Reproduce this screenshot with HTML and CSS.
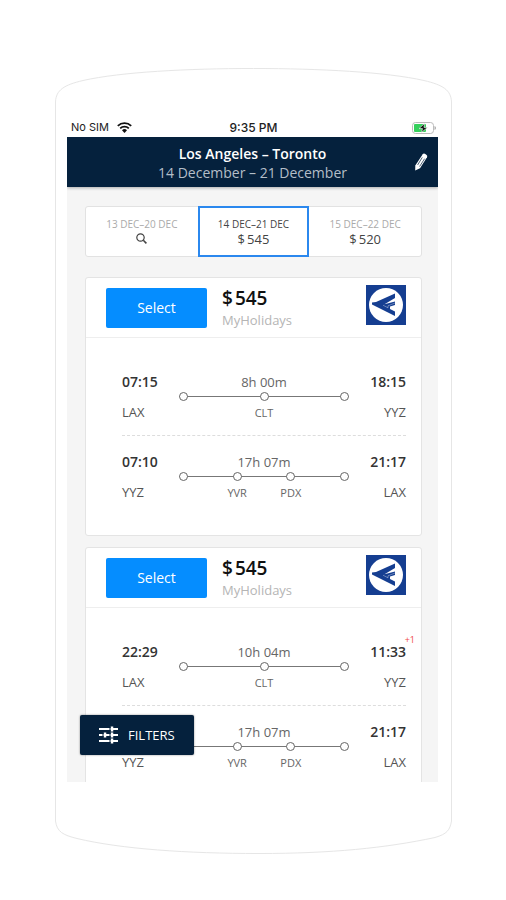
FILE: index.html
```html
<!DOCTYPE html>
<html lang="en">
<head>
<meta charset="utf-8">
<meta name="viewport" content="width=device-width, initial-scale=1">
<title>Los Angeles – Toronto flights</title>
<link rel="stylesheet" href="styles.css">
</head>
<body>
<svg width="0" height="0" class="sprite" aria-hidden="true">
  <symbol id="airline" viewBox="0 0 40 40">
    <rect width="40" height="40" fill="#153e91"/>
    <circle cx="20" cy="20" r="17" fill="#fff"/>
    <path d="M6 17.500L10 17 29 8.500V13L18.500 19.200 29 16.500V20L24 21.500V24L29 26.500V31L6 19.500z" fill="#153e91"/>
    <path d="M17 20.200L22 22.800V20.800L29 18" fill="none" stroke="#fff" stroke-width=".6" opacity=".6"/>
  </symbol>
</svg>
<div class="phone">
  <svg class="cap cap-top" viewBox="0 0 397 34" preserveAspectRatio="none" aria-hidden="true"><path d="M.5 34C1 22 9 17 28 12.500C66 4 132 .5 198.500 .5S331 4 369 12.500C388 17 396 22 396.500 34"/></svg>
  <div class="shell">
    <div class="status">
      <span class="carrier">No SIM
        <svg width="15" height="11" viewBox="0 0 15 11" aria-hidden="true"><g fill="none" stroke="#111" stroke-width="1.800"><path d="M.8 3.900a9.600 9.600 0 0 1 13.400 0"/><path d="M3.200 6.300a6.200 6.200 0 0 1 8.600 0"/></g><path d="M5 8.300a3.600 3.600 0 0 1 5 0L7.500 11z" fill="#111"/></svg>
      </span>
      <span class="clock">9:35 PM</span>
      <span class="battery">
        <svg width="24" height="12" viewBox="0 0 24 12" aria-hidden="true"><rect x=".5" y=".5" width="21" height="11" rx="3" fill="#fff" stroke="#bbb"/><path d="M22.500 4v4q1.500-.5 1.500-2T22.500 4" fill="#aaa"/><rect x="2" y="2" width="12" height="8" rx="1" fill="#35d05c"/><path d="M12.500 1.500L7 6.600h3.500L9.500 10.500 15.500 5.400H12z" fill="#111" stroke="#fff" stroke-width=".6"/></svg>
      </span>
    </div>
    <main class="screen">
      <header class="route">
        <h1>Los Angeles – Toronto</h1>
        <p>14 December – 21 December</p>
        <button class="edit" type="button" aria-label="Edit search">
          <svg width="14" height="18" viewBox="0 0 14 18" aria-hidden="true"><path d="M8.700 1.200Q9.600 0 10.900 .8L12.600 2Q13.700 2.900 13 4.200L6 15.200 1.200 17.600 1.300 12.400z" fill="#fff"/><path d="M8.300 4.400L3.600 12M10.600 5.700L5.600 13.500" stroke="#05213d" stroke-width=".7"/></svg>
        </button>
      </header>
      <div class="content">
        <nav class="dates">
          <button type="button"><span>13 DEC–20 DEC</span><b><svg width="11" height="11" viewBox="0 0 11 11" aria-label="Search"><circle cx="4.500" cy="4.500" r="3.700" fill="none" stroke="#444" stroke-width="1.200"/><path d="M7.300 7.300L10.400 10.400" stroke="#444" stroke-width="1.600"/></svg></b></button>
          <button type="button" class="active"><span>14 DEC–21 DEC</span><b>$<i>545</i></b></button>
          <button type="button"><span>15 DEC–22 DEC</span><b>$<i>520</i></b></button>
        </nav>

        <article class="card">
          <div class="offer">
            <button class="select" type="button">Select</button>
            <div class="price"><strong>$<i>545</i></strong><span>MyHolidays</span></div>
            <svg class="logo" role="img" aria-label="Airline"><use href="#airline"/></svg>
          </div>
          <div class="legs">
            <section class="leg">
              <div class="end"><time>07:15</time><span>LAX</span></div>
              <div class="track"><p>8h 00m</p><ul><li></li><li><span>CLT</span></li><li></li></ul></div>
              <div class="end right"><time>18:15</time><span>YYZ</span></div>
            </section>
            <section class="leg">
              <div class="end"><time>07:10</time><span>YYZ</span></div>
              <div class="track"><p>17h 07m</p><ul><li></li><li><span>YVR</span></li><li><span>PDX</span></li><li></li></ul></div>
              <div class="end right"><time>21:17</time><span>LAX</span></div>
            </section>
          </div>
        </article>

        <article class="card">
          <div class="offer">
            <button class="select" type="button">Select</button>
            <div class="price"><strong>$<i>545</i></strong><span>MyHolidays</span></div>
            <svg class="logo" role="img" aria-label="Airline"><use href="#airline"/></svg>
          </div>
          <div class="legs">
            <section class="leg">
              <div class="end"><time>22:29</time><span>LAX</span></div>
              <div class="track"><p>10h 04m</p><ul><li></li><li><span>CLT</span></li><li></li></ul></div>
              <div class="end right"><time>11:33</time><span>YYZ</span><sup>+1</sup></div>
            </section>
            <section class="leg">
              <div class="end"><time>&nbsp;</time><span>YYZ</span></div>
              <div class="track"><p>17h 07m</p><ul><li></li><li><span>YVR</span></li><li><span>PDX</span></li><li></li></ul></div>
              <div class="end right"><time>21:17</time><span>LAX</span></div>
            </section>
          </div>
        </article>
      </div>
      <button class="filters" type="button">
        <svg width="20" height="18" viewBox="0 0 20 18" aria-hidden="true"><path d="M0 3h19M0 9h19M0 15h19" stroke="#fff" stroke-width="2"/><path d="M13 .5v5M6 6.500v5M13 6.500v5M13 12.500v5" stroke="#fff" stroke-width="2.500"/><path d="M11 1v4M4 7v4M11 7v4M11 13v4" stroke="#05213d"/></svg>
        FILTERS
      </button>
    </main>
  </div>
  <svg class="cap cap-bottom" viewBox="0 0 397 33" preserveAspectRatio="none" aria-hidden="true"><path d="M.5 0C2 11 8 14 22 17.500C66 28 132 32.500 204 32.500S331 27 380 16.500C392 13 395 9 396.500 0"/></svg>
</div>
</body>
</html>
```

FILE: styles.css
```css
*,
*::before {
  box-sizing: border-box;
  margin: 0;
  padding: 0;
}

body {
  background: #fff;
  color: #333;
  font-family: "Open Sans", "Noto Sans", sans-serif;
  font-size: 13px;
  line-height: 20px;
}

button {
  border: 0;
  background: none;
  color: inherit;
  font: inherit;
  cursor: pointer;
}

svg {
  flex: none;
}

.sprite {
  position: absolute;
}

.phone {
  display: flex;
  flex-direction: column;
  height: 100vh;
  padding: 68px 54px 46px 55px;
}

.cap {
  display: block;
  width: 100%;
  fill: none;
  stroke: #e6e6e6;
}

.cap-top {
  height: 34px;
}

.cap-bottom {
  height: 33px;
}

.shell {
  display: flex;
  flex: 1;
  flex-direction: column;
  min-height: 0;
  padding: 16px 13px 39px 11px;
  border: solid #e6e6e6;
  border-width: 0 1px;
}

.status {
  display: grid;
  grid-template-columns: 1fr auto 1fr;
  align-items: center;
  padding: 0 2px 0 4px;
  color: #222;
  font-family: Inter, sans-serif;
  font-size: 11px;
  line-height: 19px;
}

.carrier {
  display: flex;
  align-items: center;
  gap: 8px;
}

.clock {
  font-size: 12px;
  font-weight: 500;
}

.battery {
  display: flex;
  justify-content: flex-end;
}

.screen {
  position: relative;
  flex: 1;
  min-height: 0;
  overflow: hidden;
  background: #f5f5f5;
}

.route {
  position: relative;
  height: 50px;
  padding-top: 7px;
  background: #05213d;
  box-shadow: 0 1px 3px rgba(0, 0, 0, .3);
  color: #b4bec8;
  font-size: 14px;
  line-height: 19px;
  text-align: center;
}

.route h1 {
  color: #fff;
  font-size: 14px;
  font-weight: 600;
}

.edit {
  position: absolute;
  top: 16px;
  right: 10px;
  display: flex;
}

.content {
  padding: 19px 16px 0 18px;
}

.dates {
  display: grid;
  grid-template-columns: repeat(3, 1fr);
  height: 51px;
  margin-bottom: 20px;
  border: 1px solid #e2e2e2;
  border-radius: 3px;
  background: #fff;
}

.dates button {
  display: flex;
  flex-direction: column;
  align-items: center;
  justify-content: center;
}

.dates span {
  color: #aaa;
  font-size: 10px;
  line-height: 14px;
}

.dates b {
  display: flex;
  align-items: center;
  height: 16px;
  color: #444;
  font-size: 13px;
  font-weight: 400;
}

i {
  margin-left: 2px;
  font-style: normal;
}

.dates .active {
  margin: -1px 0;
  border: 2px solid #2b88ee;
}

.dates .active span {
  color: #444;
}

.card {
  margin-bottom: 11px;
  border: 1px solid #e4e4e4;
  border-radius: 3px;
  background: #fff;
}

.offer {
  display: flex;
  align-items: center;
  height: 60px;
  padding: 0 15px 0 20px;
  border-bottom: 1px solid #eee;
}

.select {
  width: 101px;
  height: 40px;
  border-radius: 2px;
  background: #058dff;
  color: #fff;
  font-size: 14px;
}

.price {
  flex: 1;
  margin-left: 15px;
}

.price strong,
.price span {
  display: block;
}

.price strong {
  color: #111;
  font-size: 19px;
  font-weight: 600;
  line-height: 24px;
}

.price span {
  color: #b5b5b5;
}

.logo {
  width: 40px;
  height: 40px;
  margin-bottom: 5px;
}

.legs {
  padding: 34px 15px 33px 36px;
}

.leg {
  display: grid;
  grid-template-columns: 57px 1fr 57px;
}

.leg + .leg {
  margin-top: 13px;
  padding-top: 16px;
  border-top: 1px dashed #ddd;
}

.end {
  position: relative;
  display: flex;
  flex-direction: column;
  gap: 10px;
  color: #555;
}

.end time {
  color: #333;
  font-size: 14px;
  font-weight: 600;
}

.right {
  text-align: right;
}

.end sup {
  position: absolute;
  top: -10px;
  right: -9px;
  color: #f04848;
  font-size: 9px;
  line-height: 16px;
}

.track {
  color: #666;
  text-align: center;
}

.track ul {
  display: flex;
  justify-content: space-between;
  background: linear-gradient(#777, #777) 0 4px / 100% 1px no-repeat;
  list-style: none;
}

.track li {
  display: flex;
  flex-direction: column;
  align-items: center;
  width: 9px;
  gap: 3px;
  font-size: 11px;
  line-height: 18px;
}

.track li::before {
  width: 9px;
  height: 9px;
  border: 1px solid #666;
  border-radius: 50%;
  background: #fff;
  content: "";
}

.filters {
  position: absolute;
  bottom: 27px;
  left: 13px;
  display: flex;
  align-items: center;
  gap: 9px;
  height: 40px;
  padding: 0 19px;
  border-radius: 2px;
  background: #05213d;
  box-shadow: 0 0 2px rgba(0, 0, 0, .5);
  color: #fff;
  font-size: 13px;
}
```
